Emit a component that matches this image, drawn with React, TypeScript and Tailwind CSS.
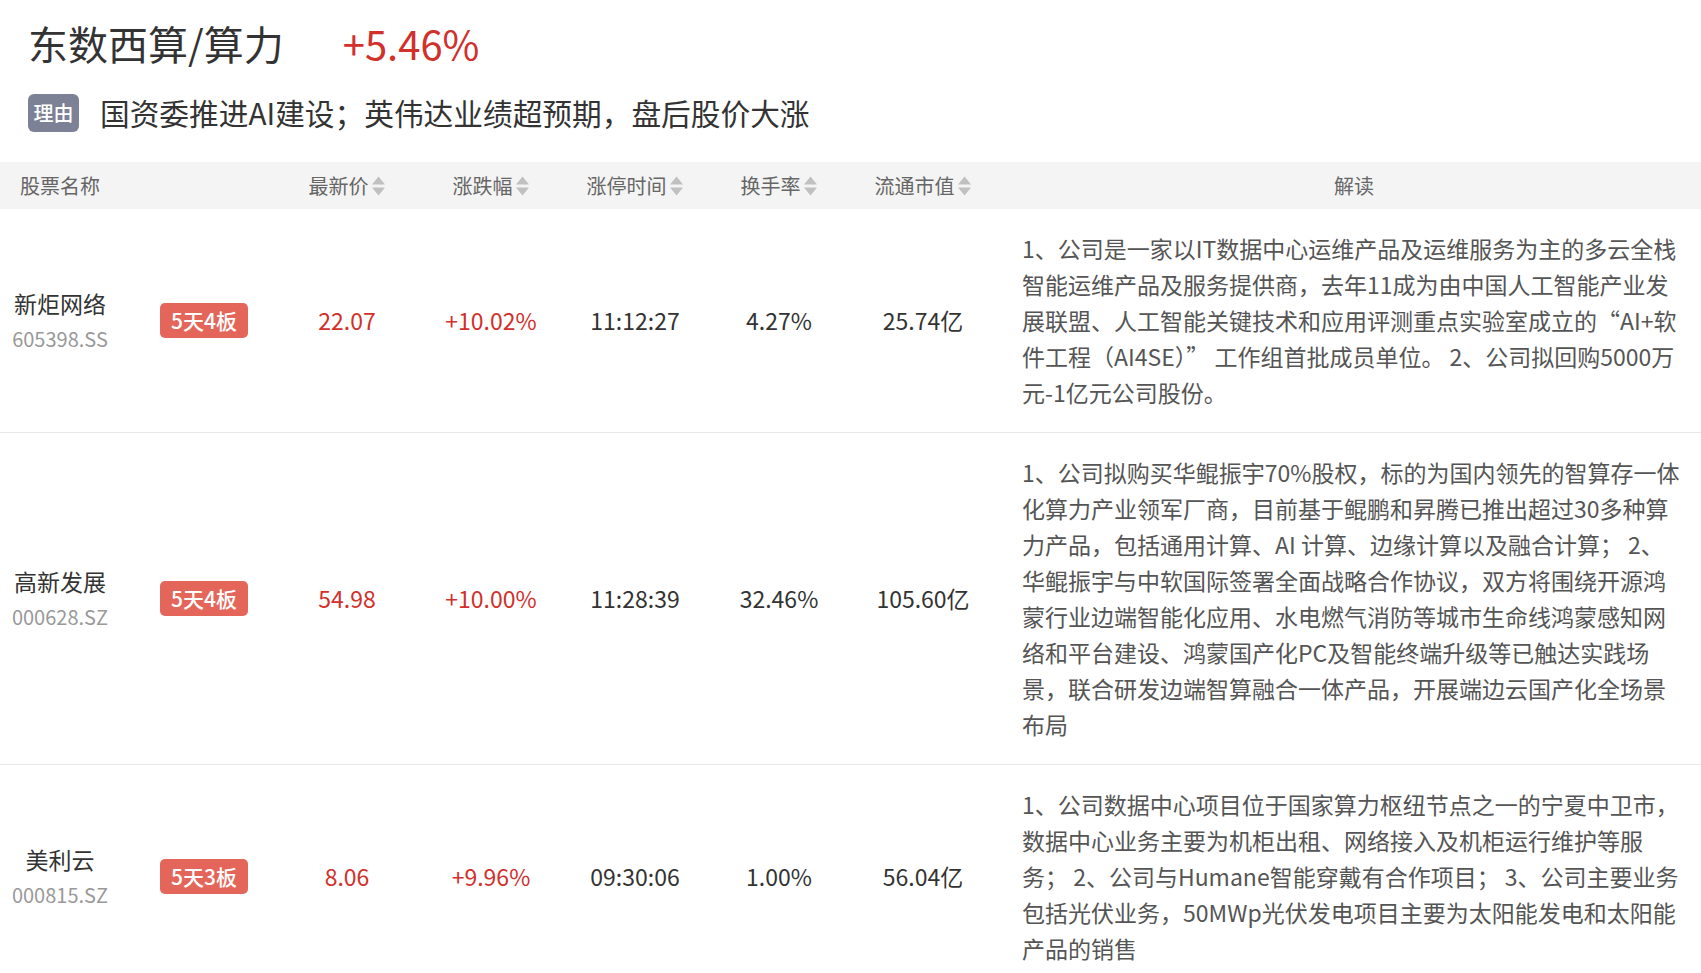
import React from "react";

const font = { fontFamily: '"Noto Sans CJK SC", "Noto Sans", sans-serif' };

type Row = {
  name: string;
  code: string;
  badge: string;
  price: string;
  change: string;
  time: string;
  turnover: string;
  cap: string;
  desc: string;
};

const rows: Row[] = [
  {
    name: "新炬网络",
    code: "605398.SS",
    badge: "5天4板",
    price: "22.07",
    change: "+10.02%",
    time: "11:12:27",
    turnover: "4.27%",
    cap: "25.74亿",
    desc: "1、公司是一家以IT数据中心运维产品及运维服务为主的多云全栈智能运维产品及服务提供商，去年11成为由中国人工智能产业发展联盟、人工智能关键技术和应用评测重点实验室成立的“AI+软件工程（AI4SE）” 工作组首批成员单位。 2、公司拟回购5000万元-1亿元公司股份。",
  },
  {
    name: "高新发展",
    code: "000628.SZ",
    badge: "5天4板",
    price: "54.98",
    change: "+10.00%",
    time: "11:28:39",
    turnover: "32.46%",
    cap: "105.60亿",
    desc: "1、公司拟购买华鲲振宇70%股权，标的为国内领先的智算存一体化算力产业领军厂商，目前基于鲲鹏和昇腾已推出超过30多种算力产品，包括通用计算、AI 计算、边缘计算以及融合计算； 2、华鲲振宇与中软国际签署全面战略合作协议，双方将围绕开源鸿蒙行业边端智能化应用、水电燃气消防等城市生命线鸿蒙感知网络和平台建设、鸿蒙国产化PC及智能终端升级等已触达实践场景，联合研发边端智算融合一体产品，开展端边云国产化全场景布局",
  },
  {
    name: "美利云",
    code: "000815.SZ",
    badge: "5天3板",
    price: "8.06",
    change: "+9.96%",
    time: "09:30:06",
    turnover: "1.00%",
    cap: "56.04亿",
    desc: "1、公司数据中心项目位于国家算力枢纽节点之一的宁夏中卫市，数据中心业务主要为机柜出租、网络接入及机柜运行维护等服务； 2、公司与Humane智能穿戴有合作项目； 3、公司主要业务包括光伏业务，50MWp光伏发电项目主要为太阳能发电和太阳能产品的销售",
  },
];

function SortIcon() {
  return (
    <svg width="15" height="22" viewBox="0 0 15 22" className="ml-[2px]">
      <path d="M7.5 1.5 L14 9.5 L1 9.5 Z" fill="#c0c0c0" />
      <path d="M1 12.5 L14 12.5 L7.5 20.5 Z" fill="#c0c0c0" />
    </svg>
  );
}

const grid = "grid grid-cols-[120px_155px_144px_144px_144px_144px_144px_1fr]";

export default function App() {
  return (
    <div className="w-[1701px] min-h-[973px] bg-white text-[#333]" style={font}>
      <div className="pl-[28px] pt-[15px] flex items-center h-[70px]">
        <div className="text-[40px] leading-[54px] text-[#333]">东数西算/算力</div>
        <div className="text-[40px] leading-[54px] text-[#d1302b] ml-[59px]">+5.46%</div>
      </div>
      <div className="pl-[28px] mt-[24px] flex items-center h-[38px]">
        <div className="w-[51px] h-[38px] rounded-[6px] bg-[#7d8196] text-white text-[20px] font-medium flex items-center justify-center">
          理由
        </div>
        <div className="ml-[21px] text-[29.7px] leading-[38px] text-[#333]">
          国资委推进AI建设；英伟达业绩超预期，盘后股价大涨
        </div>
      </div>

      <div className={`${grid} mt-[30px] h-[47px] bg-[#f4f4f4] text-[20px] text-[#666] items-center`}>
        <div className="col-span-2 pl-[20px]">股票名称</div>
        {["最新价", "涨跌幅", "涨停时间", "换手率", "流通市值"].map((h) => (
          <div key={h} className="flex items-center justify-center">
            <span>{h}</span>
            <SortIcon />
          </div>
        ))}
        <div className="text-center pl-[12px]">解读</div>
      </div>

      {rows.map((r) => (
        <div key={r.code} className={`${grid} border-b border-[#e9e9e9] items-center`}>
          <div className="flex flex-col items-center">
            <div className="text-[23px] leading-[36px] text-[#333]">{r.name}</div>
            <div className="text-[20px] leading-[36px] text-[#999]">{r.code}</div>
          </div>
          <div className="pl-[40px] flex items-center">
            <span className="h-[35px] px-[11px] rounded-[5px] bg-[#e4665a] text-white text-[21px] font-medium leading-[35px]">
              {r.badge}
            </span>
          </div>
          <div className="text-center text-[23px] text-[#d1302b]">{r.price}</div>
          <div className="text-center text-[23px] text-[#d1302b]">{r.change}</div>
          <div className="text-center text-[23px] text-[#333]">{r.time}</div>
          <div className="text-center text-[23px] text-[#333]">{r.turnover}</div>
          <div className="text-center text-[23px] text-[#333]">{r.cap}</div>
          <div className="pl-[27px] pr-[17px] pt-[21px] pb-[22px] text-[23px] leading-[36px] text-[#555]">
            {r.desc}
          </div>
        </div>
      ))}
    </div>
  );
}
